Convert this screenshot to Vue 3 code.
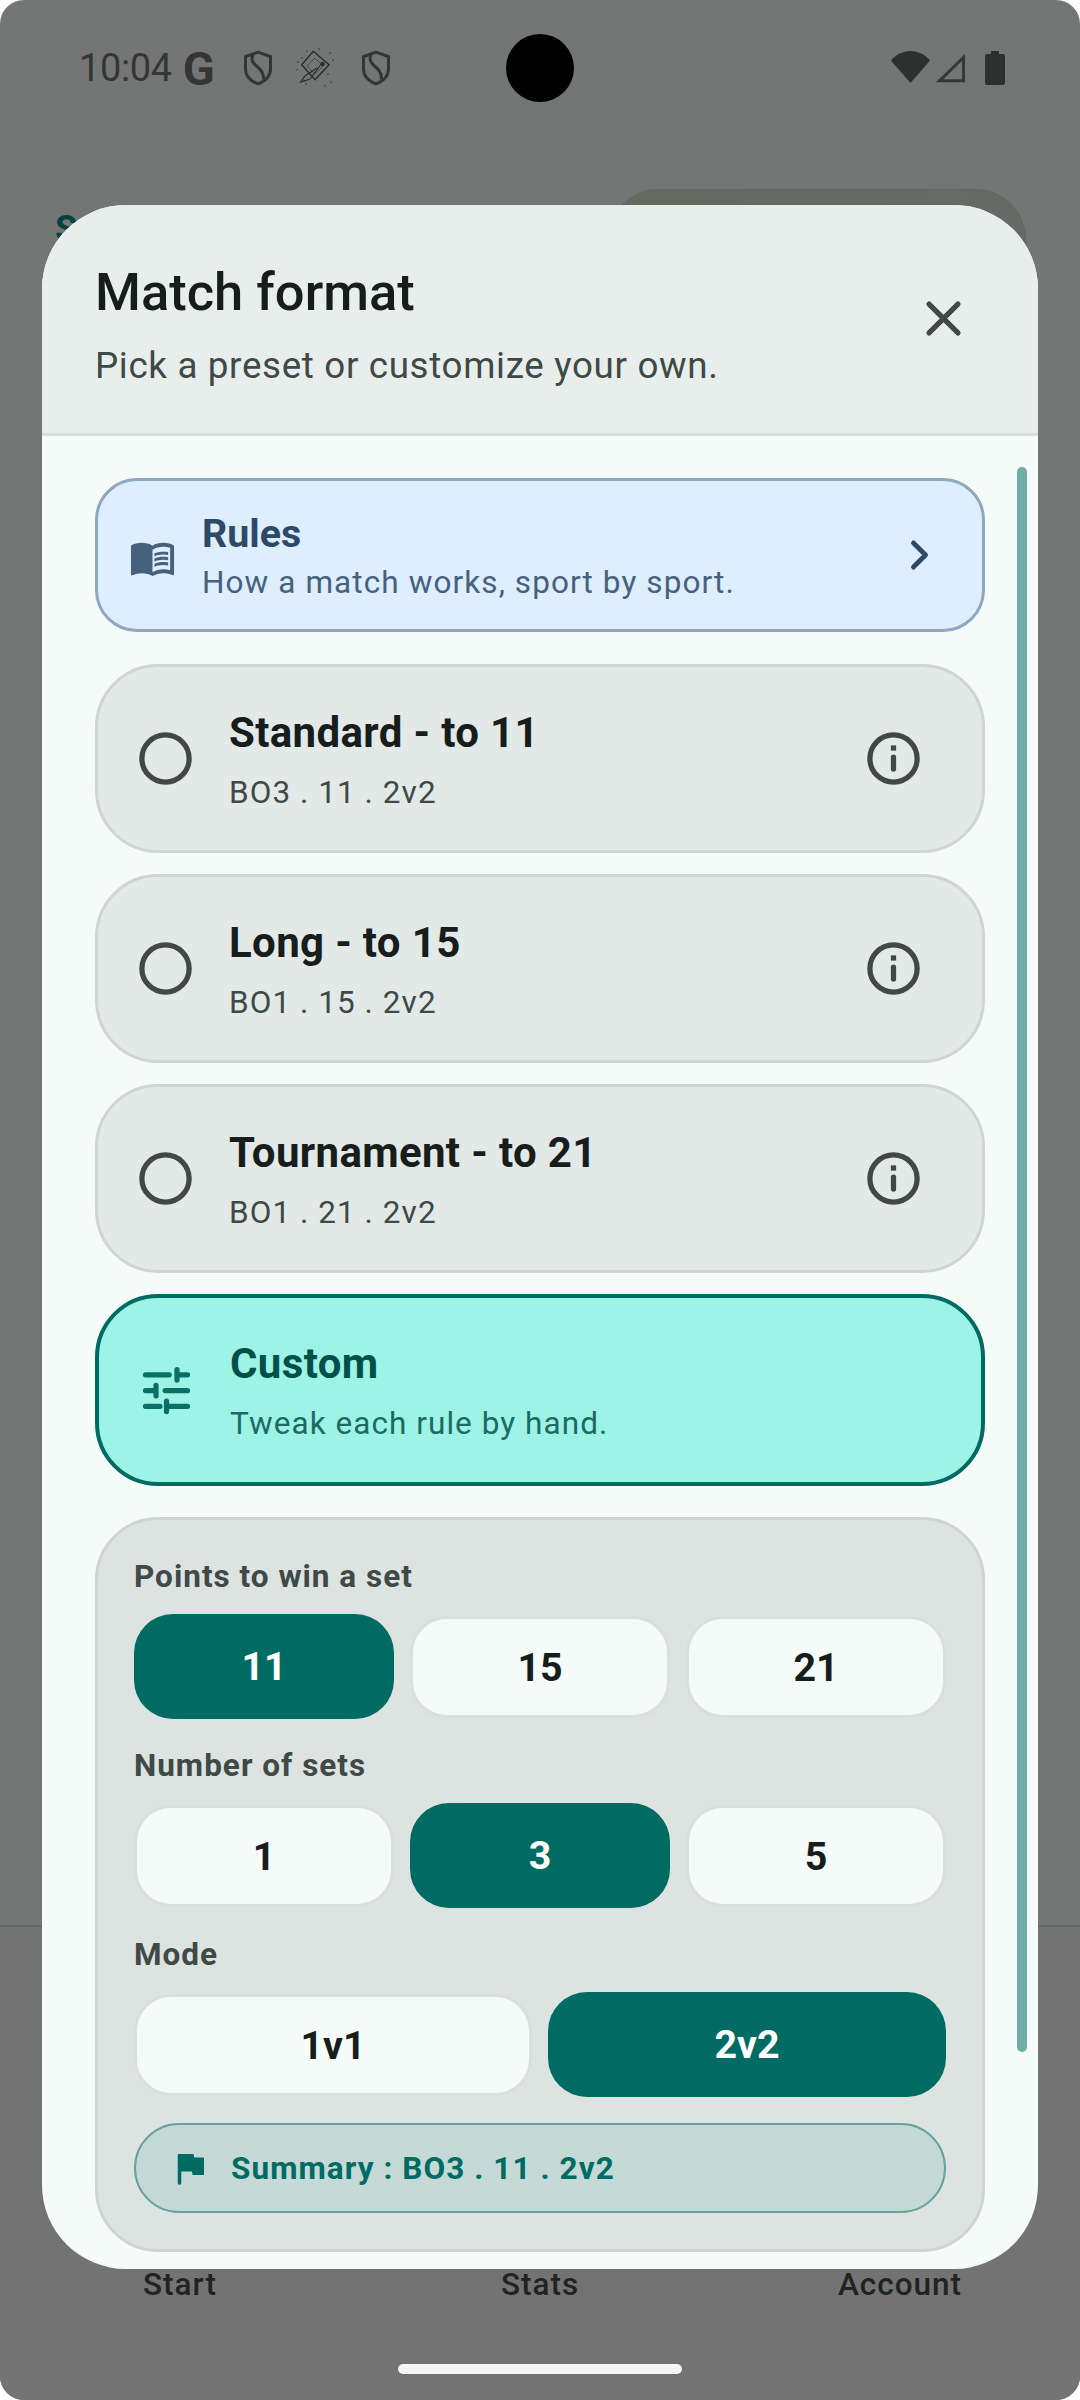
<script setup>
const presets = [
  { title: 'Standard - to 11', meta: 'BO3 . 11 . 2v2' },
  { title: 'Long - to 15', meta: 'BO1 . 15 . 2v2' },
  { title: 'Tournament - to 21', meta: 'BO1 . 21 . 2v2' },
]

const groups = [
  { label: 'Points to win a set', options: ['11', '15', '21'], active: '11' },
  { label: 'Number of sets', options: ['1', '3', '5'], active: '3' },
  { label: 'Mode', options: ['1v1', '2v2'], active: '2v2' },
]

const navItems = ['Start', 'Stats', 'Account']
const starDots = [
  [2, 22], [7, 10], [9, 33], [12, 3], [24, 1], [30, 38], [35, 5], [36, 34], [38, 12], [3, 14], [33, 26], [11, 36],
]
</script>

<template>
  <div class="screen">
    <!-- page behind the scrim -->
    <div class="backdrop">
      <span class="peek-letter">S</span>
      <div class="peek-card"></div>
      <div class="nav-line"></div>
      <div class="nav">
        <span v-for="item in navItems" :key="item" class="nav-item">{{ item }}</span>
      </div>
      <div class="home-bar"></div>
    </div>

    <div class="status">
      <span class="time">10:04</span>
      <span class="g-mark">G</span>
      <svg class="shield first" viewBox="0 0 30 36">
        <path d="M15 2.200 27.500 6.500v12.200c0 7-5.200 12.400-12.500 15.200C7.700 31.100 2.500 25.700 2.500 18.700V6.500Z" fill="none" stroke="#333635" stroke-width="3" />
        <path d="M10 4.500c-2.500 5-.5 8 3 11 4 3.500 8 7 7.500 14" fill="none" stroke="#333635" stroke-width="3" />
      </svg>
      <svg class="spark" viewBox="0 0 40 40">
        <circle v-for="(d, i) in starDots" :key="i" :cx="d[0]" :cy="d[1]" r=".8" fill="#2d302f" />
        <path d="M18.300 3.300 34 16.700 20 31.700 6.700 16.700Z" fill="none" stroke="#2d302f" stroke-width="1.500" />
        <path d="M20 10 28 18 20 26 12 18Z" fill="none" stroke="#4a4e4c" stroke-width="1" />
        <path d="M27 15 15 31 5.700 34 10 28 22 20" fill="none" stroke="#2d302f" stroke-width="1.200" />
        <circle cx="27.500" cy="16" r="2.200" fill="#2d302f" />
      </svg>
      <svg class="shield last" viewBox="0 0 30 36">
        <path d="M15 2.200 27.500 6.500v12.200c0 7-5.200 12.400-12.500 15.200C7.700 31.100 2.500 25.700 2.500 18.700V6.500Z" fill="none" stroke="#333635" stroke-width="3" />
        <path d="M10 4.500c-2.500 5-.5 8 3 11 4 3.500 8 7 7.500 14" fill="none" stroke="#333635" stroke-width="3" />
      </svg>

      <div class="camera"></div>

      <div class="status-right">
        <svg class="wifi" viewBox="0 0 39 32">
          <path d="M19.500 32 0 9.500C5 3.500 12 0 19.500 0S34 3.500 39 9.500Z" fill="#2d302f" />
        </svg>
        <svg class="signal" viewBox="0 0 32 31">
          <path d="M29.500 5.500V28.800H5.500Z" fill="none" stroke="#353837" stroke-width="3" />
        </svg>
        <svg class="battery" viewBox="0 0 20 34">
          <path d="M6 0h8v3h4a2 2 0 0 1 2 2v27a2 2 0 0 1-2 2H2a2 2 0 0 1-2-2V5a2 2 0 0 1 2-2h4Z" fill="#2d302f" />
        </svg>
      </div>
    </div>

    <div class="dialog">
      <header class="dialog-head">
        <div class="head-text">
          <h1 class="dialog-title">Match format</h1>
          <p class="dialog-sub">Pick a preset or customize your own.</p>
        </div>
        <svg class="icon close" viewBox="0 0 24 24">
          <path d="M6.500 6.500l11 11M17.500 6.500l-11 11" fill="none" stroke="#3f4946" stroke-width="2" stroke-linecap="round" />
        </svg>
      </header>

      <div class="dialog-body">
        <div class="rules">
          <svg class="book" viewBox="0 0 24 24">
            <path fill="#46617e" d="M21 5c-1.110-.35-2.330-.5-3.500-.5-1.950 0-4.050.4-5.500 1.500-1.450-1.100-3.550-1.500-5.500-1.500S2.450 4.900 1 6v14.650c0 .25.25.5.5.5.1 0 .15-.05.25-.05C3.100 20.450 5.050 20 6.500 20c1.950 0 4.050.4 5.500 1.500 1.350-.85 3.800-1.500 5.500-1.500 1.650 0 3.350.3 4.750 1.050.1.05.15.05.25.05.25 0 .5-.25.5-.5V6c-.6-.45-1.250-.75-2-1zm0 13.500c-1.100-.35-2.300-.5-3.500-.5-1.700 0-4.150.65-5.500 1.500V8c1.350-.85 3.800-1.500 5.500-1.500 1.200 0 2.400.15 3.500.5v11.500z" />
            <path fill="#46617e" d="M17.500 10.500c.88 0 1.730.09 2.500.26V9.240c-.79-.15-1.640-.24-2.500-.24-1.700 0-3.240.29-4.500.83v1.660c1.130-.64 2.700-.99 4.500-.99zM13 12.490v1.660c1.130-.64 2.700-.99 4.500-.99.88 0 1.730.09 2.500.26V11.900c-.79-.15-1.640-.24-2.500-.24-1.700 0-3.240.3-4.500.83zM17.500 14.330c-1.700 0-3.240.29-4.500.83v1.660c1.130-.64 2.700-.99 4.500-.99.88 0 1.730.09 2.500.26v-1.520c-.79-.16-1.640-.24-2.500-.24z" />
          </svg>
          <div class="rules-text">
            <div class="rules-title">Rules</div>
            <div class="rules-sub">How a match works, sport by sport.</div>
          </div>
          <svg class="chevron" viewBox="0 0 24 24">
            <path d="M9.300 7l5 5-5 5" fill="none" stroke="#2c4a68" stroke-width="2" stroke-linecap="round" stroke-linejoin="round" />
          </svg>
        </div>

        <div v-for="preset in presets" :key="preset.title" class="preset">
          <svg class="icon" viewBox="0 0 24 24">
            <circle cx="12" cy="12" r="9" fill="none" stroke="#404945" stroke-width="2" />
          </svg>
          <div class="preset-text">
            <div class="preset-title">{{ preset.title }}</div>
            <div class="preset-meta">{{ preset.meta }}</div>
          </div>
          <svg class="icon" viewBox="0 0 24 24">
            <circle cx="12" cy="12" r="9" fill="none" stroke="#404945" stroke-width="2" />
            <path d="M12 11.500V16" fill="none" stroke="#404945" stroke-width="2" stroke-linecap="round" />
            <rect x="11" y="7" width="2" height="2" fill="#404945" />
          </svg>
        </div>

        <div class="custom">
          <svg class="icon" viewBox="0 0 24 24">
            <path d="M4 6h9M16 4v4M16 6h4M4 12h4M8 10v4M11.500 12H20M4 18h5.500M12 16v4M12 18h8" fill="none" stroke="#0a6f66" stroke-width="2" stroke-linecap="round" />
          </svg>
          <div class="preset-text">
            <div class="custom-title">Custom</div>
            <div class="custom-sub">Tweak each rule by hand.</div>
          </div>
        </div>

        <div class="panel">
          <div v-for="group in groups" :key="group.label" class="group">
            <div class="group-label">{{ group.label }}</div>
            <div class="chips" :class="{ two: group.options.length === 2 }">
              <div v-for="opt in group.options" :key="opt" class="chip" :class="{ on: opt === group.active }">{{ opt }}</div>
            </div>
          </div>
          <div class="summary">
            <svg class="flag" viewBox="0 0 24 24">
              <path d="M5 4.500c0-.3.2-.5.5-.5H14l.4 2h5.100c.3 0 .5.200.5.500v9c0 .3-.2.500-.5.500H13.500l-.4-2H7v6.500a1 1 0 0 1-2 0Z" fill="#006b62" />
            </svg>
            <span>Summary : BO3 . 11 . 2v2</span>
          </div>
        </div>
      </div>

      <div class="scrollbar"></div>
    </div>
  </div>
</template>

<style scoped>
.screen {
  position: relative;
  width: 1080px;
  height: 2400px;
  overflow: hidden;
  background: #747675;
  border-radius: 24px;
  font-family: Roboto, sans-serif;
}

.backdrop {
  position: absolute;
  inset: 0;
}

.peek-letter {
  position: absolute;
  left: 55px;
  top: 208px;
  font-size: 36px;
  font-weight: 700;
  line-height: 42px;
  color: #00433c;
}

.peek-card {
  position: absolute;
  left: 608px;
  top: 189px;
  box-sizing: border-box;
  width: 418px;
  height: 120px;
  background: linear-gradient(90deg, #646a5c, #666a66 60%, #676967);
  border: 1px solid #646664;
  border-radius: 50px 50px 0 0;
}

.nav-line {
  position: absolute;
  left: 0;
  right: 0;
  top: 1925px;
  height: 2px;
  background: #676968;
}

.nav {
  position: absolute;
  left: 0;
  right: 0;
  top: 1927px;
  bottom: 0;
  background: #727372;
}

.nav-item {
  position: absolute;
  top: 339px;
  font-size: 31.500px;
  line-height: 38px;
  font-weight: 500;
  letter-spacing: 1px;
  color: #1f2322;
  transform: translateX(-50%);
}

.nav-item:nth-child(1) { left: 180px; }
.nav-item:nth-child(2) { left: 540px; }
.nav-item:nth-child(3) { left: 900px; }

.home-bar {
  position: absolute;
  left: 398px;
  top: 2364px;
  width: 284px;
  height: 10px;
  background: #f5f5f5;
  border-radius: 5px;
}

.status {
  position: relative;
  display: flex;
  align-items: center;
  height: 136px;
  padding-left: 79px;
}

.time {
  font-size: 38px;
  letter-spacing: -.4px;
  color: #333635;
}

.g-mark {
  margin-left: 11px;
  font-size: 47px;
  font-weight: 700;
  color: #333635;
}

.shield {
  width: 30px;
  height: 36px;
}

.shield.first { margin-left: 28px; }
.shield.last { margin-left: 26px; }

.spark {
  width: 40px;
  height: 40px;
  margin-left: 22px;
}

.camera {
  position: absolute;
  left: 506px;
  top: 34px;
  width: 68px;
  height: 68px;
  background: #000;
  border-radius: 50%;
}

.status-right {
  position: absolute;
  left: 891px;
  top: 51px;
  display: flex;
  align-items: flex-start;
}

.wifi { width: 39px; height: 32px; }
.signal { width: 32px; height: 31px; margin-left: 4px; margin-top: 1px; }
.battery { width: 20px; height: 34px; margin-left: 19px; }

.dialog {
  position: absolute;
  left: 42px;
  top: 205px;
  width: 996px;
  height: 2064px;
  display: flex;
  flex-direction: column;
  overflow: hidden;
  background: #f5fbf9;
  border-radius: 84px;
}

.dialog-head {
  display: flex;
  align-items: center;
  justify-content: space-between;
  box-sizing: border-box;
  height: 231px;
  padding: 0 63px 3px 53px;
  background: #e8eeec;
  border-bottom: 3px solid #d6dedb;
}

.head-text {
  margin: 12px 0 0;
}

.close {
  margin-top: 2px;
}

.dialog-title {
  margin: 0;
  font-size: 52.500px;
  line-height: 68px;
  font-weight: 500;
  color: #171d1b;
}

.dialog-sub {
  margin: 16px 0 0;
  font-size: 36.750px;
  line-height: 48px;
  letter-spacing: .66px;
  color: #3f4946;
}

.icon {
  flex: none;
  width: 63px;
  height: 63px;
}

.dialog-body {
  display: flex;
  flex-direction: column;
  padding: 42px 53px 0;
}

.rules {
  display: flex;
  align-items: center;
  box-sizing: border-box;
  height: 154px;
  padding: 0 33px 0 31px;
  background: #deeefc;
  border: 3px solid #90a7c0;
  border-radius: 42px;
}

.book {
  flex: none;
  width: 47px;
  height: 47px;
  margin-top: 4px;
}

.rules-text {
  flex: 1;
  margin: 6px 0 0 26px;
}

.rules-title {
  font-size: 39.400px;
  line-height: 48px;
  font-weight: 700;
  color: #2c4a68;
}

.rules-sub {
  margin-top: 1px;
  font-size: 31.500px;
  line-height: 48px;
  letter-spacing: 1.090px;
  color: #46617e;
}

.chevron {
  flex: none;
  width: 58px;
  height: 58px;
}

.preset {
  display: flex;
  align-items: center;
  box-sizing: border-box;
  height: 189px;
  margin-top: 21px;
  padding: 0 57px 0 36px;
  background: #e3e9e7;
  border: 3px solid #cdd6d3;
  border-radius: 63px;
}

.rules + .preset {
  margin-top: 32px;
}

.preset-text {
  flex: 1;
  margin: 3px 0 0 32px;
}

.preset-title,
.custom-title {
  font-size: 42px;
  line-height: 56px;
  font-weight: 700;
  letter-spacing: .35px;
  color: #171d1b;
}

.preset-meta,
.custom-sub {
  margin-top: 9px;
  font-size: 31.500px;
  line-height: 46px;
  letter-spacing: 1.050px;
  color: #3f4946;
}

.custom {
  display: flex;
  align-items: center;
  box-sizing: border-box;
  height: 192px;
  margin-top: 21px;
  padding: 0 36px;
  background: #9df3e6;
  border: 4px solid #006b62;
  border-radius: 63px;
}

.custom-title {
  color: #00504a;
}

.custom-sub {
  color: #1b6b62;
}

.panel {
  box-sizing: border-box;
  height: 735px;
  margin-top: 31px;
  padding: 33px 36px 0;
  background: #dde3e1;
  border: 3px solid #cdd6d3;
  border-radius: 63px;
}

.group + .group {
  margin-top: 23px;
}

.group-label {
  margin-bottom: 13px;
  font-size: 31.500px;
  line-height: 48px;
  font-weight: 700;
  letter-spacing: 1px;
  color: #3f4946;
}

.chips {
  display: grid;
  grid-template-columns: repeat(3, 1fr);
  gap: 16px;
}

.chips.two {
  grid-template-columns: repeat(2, 1fr);
}

.chip {
  display: flex;
  align-items: center;
  justify-content: center;
  box-sizing: border-box;
  height: 102px;
  margin: 2px 0 1px;
  font-size: 39.400px;
  font-weight: 700;
  color: #171d1b;
  background: #f5fbf9;
  border: 3px solid #d9dfdd;
  border-radius: 37px;
}

.chip.on {
  height: 105px;
  margin: 0;
  color: #fff;
  background: #006b62;
  border: 0;
  border-radius: 39px;
}

.summary {
  display: flex;
  align-items: center;
  box-sizing: border-box;
  height: 90px;
  margin-top: 26px;
  padding-left: 33px;
  font-size: 31.500px;
  font-weight: 700;
  letter-spacing: 1.060px;
  color: #006b62;
  background: #c5d9d7;
  border: 2px solid #66a39c;
  border-radius: 45px;
}

.flag {
  flex: none;
  width: 42px;
  height: 42px;
  margin-right: 20px;
}

.scrollbar {
  position: absolute;
  left: 975px;
  top: 262px;
  width: 10px;
  height: 1585px;
  background: #70ada6;
  border-radius: 5px;
}
</style>
